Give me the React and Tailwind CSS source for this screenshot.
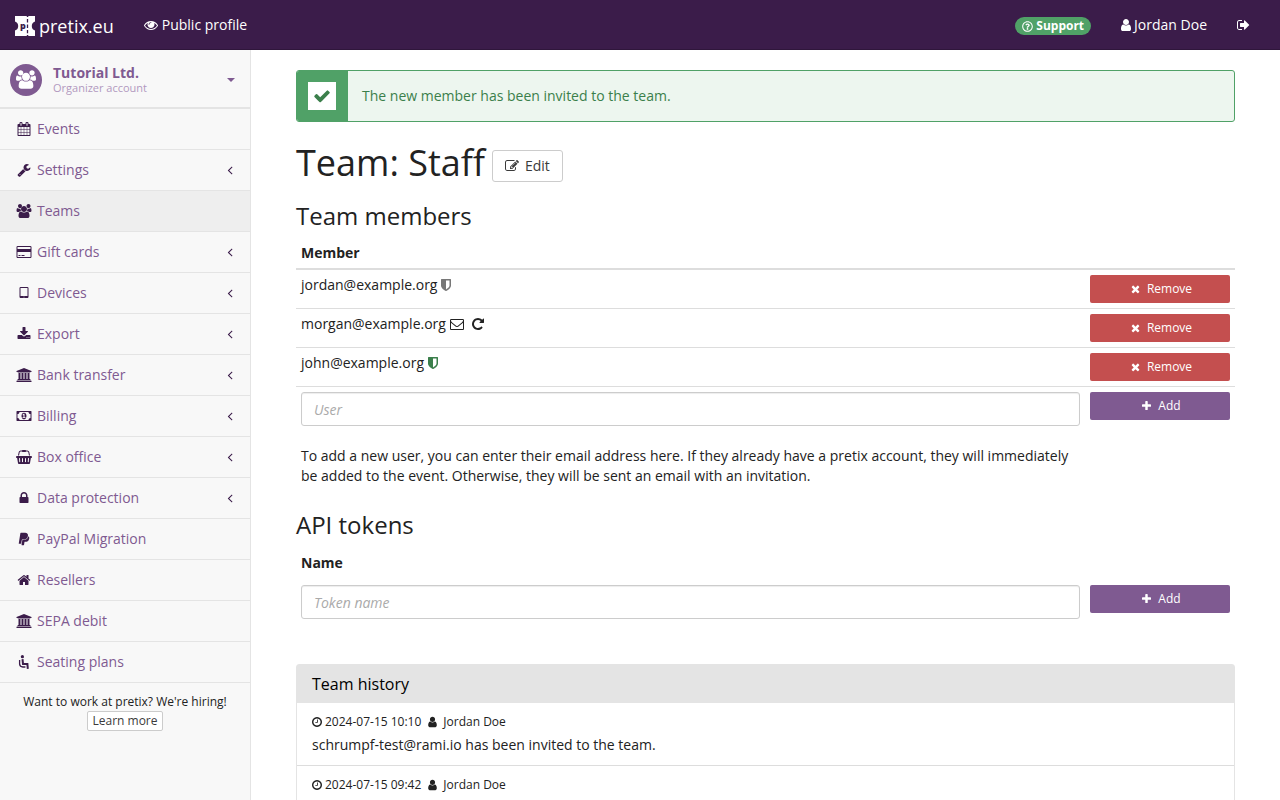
import React from "react";
import { FaPaypal, FaRegQuestionCircle } from "react-icons/fa";

// Each entry: [advance width, canvas width, path] on a 1792-unit-high grid.
const ICONS = {
  eye: [1792, 1792, "M1664 960q-152-236-381-353 61 104 61 225 0 185-131.5 316.5t-316.5 131.5-316.5-131.5-131.5-316.5q0-121 61-225-229 117-381 353 133 205 333.5 326.5t434.5 121.5 434.5-121.5 333.5-326.5zm-720-384q0-20-14-34t-34-14q-125 0-214.5 89.5t-89.5 214.5q0 20 14 34t34 14 34-14 14-34q0-86 61-147t147-61q20 0 34-14t14-34zm848 384q0 34-20 69-140 230-376.5 368.5t-499.5 138.5-499.5-139-376.5-368q-20-35-20-69t20-69q140-229 376.5-368t499.5-139 499.5 139 376.5 368q20 35 20 69z"],
  user: [1280, 1792, "M1536 1399q0 109-62.5 187t-150.5 78h-854q-88 0-150.5-78t-62.5-187q0-85 8.5-160.5t31.5-152 58.5-131 94-89 134.5-34.5q131 128 313 128t313-128q76 0 134.5 34.5t94 89 58.5 131 31.5 152 8.5 160.5zm-256-887q0 159-112.5 271.5t-271.5 112.5-271.5-112.5-112.5-271.5 112.5-271.5 271.5-112.5 271.5 112.5 112.5 271.5z"],
  users: [1920, 1792, "M529 896q-162 5-265 128H130q-82 0-138-40.5T-64 865q0-353 124-353 6 0 43.5 21t97.5 42.5T320 597q67 0 133-23-5 37-5 66 0 139 81 256zm1071 637q0 120-73 189.5t-194 69.5H459q-121 0-194-69.5T192 1533q0-53 3.5-103.5t14-109T236 1212t43-97.5 62-81 85.5-53.5T538 960q10 0 43 21.5t73 48 107 48 135 21.5 135-21.5 107-48 73-48 43-21.5q61 0 111.5 20t85.5 53.5 62 81 43 97.5 26.5 108.5 14 109 3.5 103.5zM640 256q0 106-75 181t-181 75-181-75-75-181 75-181T384 0t181 75 75 181zm640 384q0 159-112.5 271.5T896 1024 624.5 911.5 512 640t112.5-271.5T896 256t271.5 112.5T1280 640zm576 225q0 78-56 118.5t-138 40.5h-134q-103-123-265-128 81-117 81-256 0-29-5-66 66 23 133 23 59 0 119-21.5t97.5-42.5 43.5-21q124 0 124 353zm-128-609q0 106-75 181t-181 75-181-75-75-181 75-181 181-75 181 75 75 181z"],
  calendar: [1664, 1792, "M192 1664h288v-288h-288v288zm352 0h320v-288h-320v288zm-352-352h288v-320h-288v320zm352 0h320v-320h-320v320zm-352-384h288v-288h-288v288zm736 736h320v-288h-320v288zm-384-736h320v-288h-320v288zm768 736h288v-288h-288v288zm-384-352h320v-320h-320v320zm-352-864v-288q0-13-9.5-22.5t-22.5-9.5h-64q-13 0-22.5 9.5t-9.5 22.5v288q0 13 9.5 22.5t22.5 9.5h64q13 0 22.5-9.5t9.5-22.5zm736 864h288v-320h-288v320zm-384-384h320v-288h-320v288zm384 0h288v-288h-288v288zm32-480v-288q0-13-9.5-22.5t-22.5-9.5h-64q-13 0-22.5 9.5t-9.5 22.5v288q0 13 9.5 22.5t22.5 9.5h64q13 0 22.5-9.5t9.5-22.5zm384-64v1280q0 52-38 90t-90 38h-1408q-52 0-90-38t-38-90v-1280q0-52 38-90t90-38h128v-96q0-66 47-113t113-47h64q66 0 113 47t47 113v96h384v-96q0-66 47-113t113-47h64q66 0 113 47t47 113v96h128q52 0 90 38t38 90z"],
  wrench: [1664, 1792, "M448 1472q0-26-19-45t-45-19-45 19-19 45 19 45 45 19 45-19 19-45zm644-420l-682 682q-37 37-90 37-52 0-91-37l-106-108q-38-36-38-90 0-53 38-91l681-681q39 98 114.5 173.5t173.5 114.5zm634-435q0 39-23 106-47 134-164.5 217.5t-258.5 83.5q-185 0-316.5-131.5t-131.5-316.5 131.5-316.5 316.5-131.5q58 0 121.5 16.5t107.5 46.5q16 11 16 28t-16 28l-293 169v224l193 107q5-3 79-48.5t135.5-81 70.5-35.5q15 0 23.5 10t8.5 25z"],
  card: [1920, 1920, "M1760 128q66 0 113 47t47 113v1216q0 66-47 113t-113 47h-1600q-66 0-113-47t-47-113v-1216q0-66 47-113t113-47h1600zm-1600 128q-13 0-22.5 9.5t-9.5 22.5v224h1664v-224q0-13-9.5-22.5t-22.5-9.5h-1600zm1600 1280q13 0 22.5-9.5t9.5-22.5v-608h-1664v608q0 13 9.5 22.5t22.5 9.5h1600zm-1504-128v-128h256v128h-256zm384 0v-128h384v128h-384z"],
  tablet: [1152, 1792, "M960 1408q0-26-19-45t-45-19-45 19-19 45 19 45 45 19 45-19 19-45zm384-160v-960q0-13-9.5-22.5t-22.5-9.5h-832q-13 0-22.5 9.5t-9.5 22.5v960q0 13 9.5 22.5t22.5 9.5h832q13 0 22.5-9.5t9.5-22.5zm128-960v1088q0 66-47 113t-113 47h-832q-66 0-113-47t-47-113v-1088q0-66 47-113t113-47h832q66 0 113 47t47 113z"],
  download: [1664, 1792, "M1344 1344q0-26-19-45t-45-19-45 19-19 45 19 45 45 19 45-19 19-45zm256 0q0-26-19-45t-45-19-45 19-19 45 19 45 45 19 45-19 19-45zm128-224v320q0 40-28 68t-68 28h-1472q-40 0-68-28t-28-68v-320q0-40 28-68t68-28h465l135 136q58 56 136 56t136-56l136-136h464q40 0 68 28t28 68zm-325-569q17 41-14 70l-448 448q-18 19-45 19t-45-19l-448-448q-31-29-14-70 17-39 59-39h256v-448q0-26 19-45t45-19h256q26 0 45 19t19 45v448h256q42 0 59 39z"],
  bank: [2048, 1920, "M960 0l960 384v128h-128q0 26-20.5 45t-48.5 19h-1526q-28 0-48.5-19t-20.5-45h-128v-128zm-704 640h256v768h128v-768h256v768h128v-768h256v768h128v-768h256v768h59q28 0 48.5 19t20.5 45v64h-1664v-64q0-26 20.5-45t48.5-19h59v-768zm1595 960q28 0 48.5 19t20.5 45v128h-1920v-128q0-26 20.5-45t48.5-19h1782z"],
  money: [1920, 1920, "M768 1152h384v-96h-128v-448h-114l-148 137 77 80q42-37 55-57h2v288h-128v96zm512-256q0 70-21 142t-59.5 134-101.5 101-138 39-138-39-101.5-101-59.5-134-21-142 21-142 59.5-134 101.5-101 138-39 138 39 101.5 101 59.5 134 21 142zm512 256v-512q-106 0-181-75t-75-181h-1152q0 106-75 181t-181 75v512q106 0 181 75t75 181h1152q0-106 75-181t181-75zm128-832v1152q0 26-19 45t-45 19h-1792q-26 0-45-19t-19-45v-1152q0-26 19-45t45-19h1792q26 0 45 19t19 45z"],
  basket: [2048, 2048, "M1920 768q53 0 90.5 37.5t37.5 90.5-37.5 90.5-90.5 37.5h-15l-115 662q-8 46-44 76t-82 30h-1280q-46 0-82-30t-44-76l-115-662h-15q-53 0-90.5-37.5t-37.5-90.5 37.5-90.5 90.5-37.5h1792zm-1435 800q26-2 43.5-22.5t15.5-46.5l-32-416q-2-26-22.5-43.5t-46.5-15.5-43.5 22.5-15.5 46.5l32 416q2 25 20.5 42t43.5 17h5zm411-64v-416q0-26-19-45t-45-19-45 19-19 45v416q0 26 19 45t45 19 45-19 19-45zm384 0v-416q0-26-19-45t-45-19-45 19-19 45v416q0 26 19 45t45 19 45-19 19-45zm352 5l32-416q2-26-15.5-46.5t-43.5-22.5-46.5 15.5-22.5 43.5l-32 416q-2 26 15.5 46.5t43.5 22.5h5q25 0 43.5-17t20.5-42zm-1156-1217l-93 412h-132l101-441q19-88 89-143.5t160-55.5h167q0-26 19-45t45-19h384q26 0 45 19t19 45h167q90 0 160 55.5t89 143.5l101 441h-132l-93-412q-11-44-45.5-72t-79.5-28h-167q0 26-19 45t-45 19h-384q-26 0-45-19t-19-45h-167q-45 0-79.5 28t-45.5 72z"],
  lock: [1152, 1792, "M640 768h512v-192q0-106-75-181t-181-75-181 75-75 181v192zm832 96v576q0 40-28 68t-68 28h-960q-40 0-68-28t-28-68v-576q0-40 28-68t68-28h32v-192q0-184 132-316t316-132 316 132 132 316v192h32q40 0 68 28t28 68z"],
  home: [1664, 1792, "M1472 992v480q0 26-19 45t-45 19h-384v-384h-256v384h-384q-26 0-45-19t-19-45v-480q0-1 .5-3t.5-3l575-474 575 474q1 2 1 6zm223-69l-62 74q-8 9-21 11h-3q-13 0-21-7l-692-577-692 577q-12 8-24 7-13-2-21-11l-62-74q-8-10-7-23.5t11-21.5l719-599q32-26 76-26t76 26l244 204v-195q0-14 9-23t23-9h192q14 0 23 9t9 23v408l219 182q10 8 11 21.5t-7 23.5z"],
  signout: [1664, 1792, "M704 1440q0 4 1 20t.5 26.5-3 23.5-10 19.5-20.5 6.5h-320q-119 0-203.5-84.5t-84.5-203.5v-704q0-119 84.5-203.5t203.5-84.5h320q13 0 22.5 9.5t9.5 22.5q0 4 1 20t.5 26.5-3 23.5-10 19.5-20.5 6.5h-320q-66 0-113 47t-47 113v704q0 66 47 113t113 47h312l11.5 1 11.5 3 8 5.5 7 9 2 13.5zm928-544q0 26-19 45l-544 544q-19 19-45 19t-45-19-19-45v-288h-448q-26 0-45-19t-19-45v-384q0-26 19-45t45-19h448v-288q0-26 19-45t45-19 45 19l544 544q19 19 19 45z"],
  edit: [1792, 1792, "M888 1184l116-116-152-152-116 116v56h96v96h56zm440-720q-16-16-33 1l-350 350q-17 17-1 33t33-1l350-350q17-17 1-33zm80 594v190q0 119-84.5 203.5t-203.5 84.5h-832q-119 0-203.5-84.5t-84.5-203.5v-832q0-119 84.5-203.5t203.5-84.5h832q63 0 117 25 15 7 18 23 3 17-9 29l-49 49q-14 14-32 8-23-6-45-6h-832q-66 0-113 47t-47 113v832q0 66 47 113t113 47h832q66 0 113-47t47-113v-126q0-13 9-22l64-64q15-15 35-7t20 29zm-96-738l288 288-672 672h-288v-288zm444 132l-92 92-288-288 92-92q28-28 68-28t68 28l152 152q28 28 28 68t-28 68z"],
  check: [1792, 1792, "M1671 566q0 40-28 68l-724 724-136 136q-28 28-68 28t-68-28l-136-136-362-362q-28-28-28-68t28-68l136-136q28-28 68-28t68 28l294 295 656-657q28-28 68-28t68 28l136 136q28 28 28 68z"],
  times: [1408, 1792, "M1490 1322q0 40-28 68l-136 136q-28 28-68 28t-68-28l-294-294-294 294q-28 28-68 28t-68-28l-136-136q-28-28-28-68t28-68l294-294-294-294q-28-28-28-68t28-68l136-136q28-28 68-28t68 28l294 294 294-294q28-28 68-28t68 28l136 136q28 28 28 68t-28 68l-294 294 294 294q28 28 28 68z"],
  plus: [1408, 1792, "M1600 736v192q0 40-28 68t-68 28h-416v416q0 40-28 68t-68 28h-192q-40 0-68-28t-28-68v-416h-416q-40 0-68-28t-28-68v-192q0-40 28-68t68-28h416v-416q0-40 28-68t68-28h192q40 0 68 28t28 68v416h416q40 0 68 28t28 68z"],
  shield: [1280, 1792, "M1344 960v-640h-448v1137q119-63 213-137 235-184 235-360zm192-768v768q0 86-33.5 170.5t-83 150-118 127.5-126.5 103-121 77.5-89.5 49.5-42.5 20q-12 6-26 6t-26-6q-16-7-42.5-20t-89.5-49.5-121-77.5-126.5-103-118-127.5-83-150-33.5-170.5v-768q0-26 19-45t45-19h1152q26 0 45 19t19 45z"],
  envelope: [1792, 1792, "M1664 1504v-768q-32 36-69 66-268 206-426 338-51 43-83 67t-86.5 48.5-102.5 24.5h-2q-48 0-102.5-24.5t-86.5-48.5-83-67q-158-132-426-338-37-30-69-66v768q0 13 9.5 22.5t22.5 9.5h1472q13 0 22.5-9.5t9.5-22.5zm0-1051v-24.5l-.5-13-3-12.5-5.5-9-9-7.5-14-2.5h-1472q-13 0-22.5 9.5t-9.5 22.5q0 168 147 284 193 152 401 317 6 5 35 29.5t46 37.5 44.5 31.5 50.5 27.5 43 9h2q20 0 43-9t50.5-27.5 44.5-31.5 46-37.5 35-29.5q208-165 401-317 54-43 100.5-115.5t46.5-131.5zm128-37v1088q0 66-47 113t-113 47h-1472q-66 0-113-47t-47-113v-1088q0-66 47-113t113-47h1472q66 0 113 47t47 113z"],
  repeat: [1536, 1792, "M1664 256v448q0 26-19 45t-45 19h-448q-42 0-59-40-17-39 14-69l138-138q-148-137-349-137-104 0-198.5 40.5t-163.5 109.5-109.5 163.5-40.5 198.5 40.5 198.5 109.5 163.5 163.5 109.5 198.5 40.5q119 0 225-52t179-147q7-10 23-12 15 0 25 9l137 138q9 8 9.5 20.5t-7.5 22.5q-109 132-264 204.5t-327 72.5q-156 0-298-61t-245-164-164-245-61-298 61-298 164-245 245-164 298-61q147 0 284.5 55.5t244.5 156.5l130-129q29-31 70-14 39 17 39 59z"],
  clock: [1536, 1792, "M1024 544v448q0 14-9 23t-23 9h-320q-14 0-23-9t-9-23v-64q0-14 9-23t23-9h224v-352q0-14 9-23t23-9h64q14 0 23 9t9 23zm416 352q0-148-73-273t-198-198-273-73-273 73-198 198-73 273 73 273 198 198 273 73 273-73 198-198 73-273zm224 0q0 209-103 385.5t-279.5 279.5-385.5 103-385.5-103-279.5-279.5-103-385.5 103-385.5 279.5-279.5 385.5-103 385.5 103 279.5 279.5 103 385.5z"],
  angle: [768, 1792, "M1203 544q0 13-10 23l-393 393 393 393q10 10 10 23t-10 23l-50 50q-10 10-23 10t-23-10l-466-466q-10-10-10-23t10-23l466-466q10-10 23-10t23 10l50 50q10 10 10 23z"],
};

function Icon({ name, size = 14, fixed = false, className = "" }) {
  const [advance, canvas, d] = ICONS[name];
  const width = fixed ? 2304 : advance;
  return (
    <svg
      aria-hidden="true"
      width={Math.round((width * size) / 1792)}
      height={size}
      viewBox={`${(canvas - width) / 2} 0 ${width} 1792`}
      fill="currentColor"
      className={`inline-block shrink-0 ${className}`}
    >
      <path d={d} />
    </svg>
  );
}

function SeatIcon() {
  return (
    <svg aria-hidden="true" width="18" height="16" viewBox="0 0 18 16" className="shrink-0">
      <circle cx="7.4" cy="2.7" r="1.6" fill="currentColor" />
      <path d="M7.5 5.2 8 9.9h4.4l.4 4.9" fill="none" stroke="currentColor" strokeWidth="2" />
      <path d="M4.6 6v4.2q.4 2.7 3.2 2.8h2.6" fill="none" stroke="currentColor" strokeWidth="1.3" />
    </svg>
  );
}

function Logo() {
  return (
    <svg aria-hidden="true" width="20" height="20" viewBox="0 0 20 20" className="shrink-0">
      <path d="M0 0h11.8v1h1.5V0H20v5.5Q16.8 6.500 16.8 10T20 14.500V20h-6.700v-1h-1.500v1H0v-5.500Q3.200 13.500 3.200 10T0 5.500z" fill="#fff" />
      <path d="M12.500 3v3.500M12.500 8.500v3.500M12.500 14v3.200" stroke="#3b1c4a" strokeWidth="1.300" />
      <text x="5" y="12.500" fontSize="9" fontWeight="800" fontFamily="Open Sans, sans-serif" fill="#3b1c4a">p</text>
    </svg>
  );
}

const NAV = [
  ["Events", "calendar", false],
  ["Settings", "wrench", true],
  ["Teams", "users", false],
  ["Gift cards", "card", true],
  ["Devices", "tablet", true],
  ["Export", "download", true],
  ["Bank transfer", "bank", true],
  ["Billing", "money", true],
  ["Box office", "basket", true],
  ["Data protection", "lock", true],
  ["PayPal Migration", "paypal", false],
  ["Resellers", "home", false],
  ["SEPA debit", "bank", false],
  ["Seating plans", "seat", false],
];

function NavIcon({ name }) {
  if (name === "seat") return <SeatIcon />;
  if (name === "paypal") return <FaPaypal aria-hidden="true" className="h-[14px] w-[18px] shrink-0" />;
  return <Icon name={name} fixed />;
}

function Sidebar() {
  return (
    <aside className="w-[251px] shrink-0 border-r border-[#e4e4e4] bg-[#f8f8f8]">
      <button type="button" className="flex h-[59px] w-full items-center border-b-2 border-[#e4e4e4] pt-[2px] pr-[15px] pl-[10px] text-left">
        <span className="flex size-8 shrink-0 items-center justify-center rounded-full bg-[#7f5a91] text-white">
          <Icon name="users" size={19} />
        </span>
        <span className="ml-[11px] grow">
          <span className="block text-[14px] leading-[15px] font-bold text-[#7f5a91]">Tutorial Ltd.</span>
          <span className="block text-[11px] leading-[15px] text-[#b298bf]">Organizer account</span>
        </span>
        <svg aria-hidden="true" width="8" height="4" viewBox="0 0 8 4" className="text-[#7f5a91]">
          <path d="M0 0h8L4 4z" fill="currentColor" />
        </svg>
      </button>
      <nav>
        <ul>
          {NAV.map(([label, icon, more]) => (
            <li key={label} className="border-b border-[#e4e4e4]">
              <a
                href="#"
                className={`flex h-10 items-center gap-1 pr-[17px] pl-[15px] text-[#3b1c4a] ${label === "Teams" ? "bg-[#eeeeee]" : ""}`}
              >
                <NavIcon name={icon} />
                <span className="grow text-[#7f5a91]">{label}</span>
                {more && <Icon name="angle" />}
              </a>
            </li>
          ))}
        </ul>
      </nav>
      <div className="pt-[10px] text-center text-[12px] leading-[18px] text-[#222222]">
        <p>Want to work at pretix? We're hiring!</p>
        <a href="#" className="inline-block rounded-[2px] border border-[#cccccc] bg-white px-1 leading-[18px] text-[#3b3b3b]">
          Learn more
        </a>
      </div>
    </aside>
  );
}

function ActionButton({ icon, color, children }) {
  return (
    <button type="button" className={`flex h-7 w-full items-center justify-center gap-[7px] rounded-[2px] pl-[3px] text-[12px] text-white ${color}`}>
      <Icon name={icon} size={12} />
      {children}
    </button>
  );
}

const MEMBERS = [
  ["jordan@example.org", <Icon key="s" name="shield" className="text-[#777777]" />],
  [
    "morgan@example.org",
    <React.Fragment key="m">
      <Icon name="envelope" />
      <button type="button" aria-label="Resend invite" className="ml-1 flex"><Icon name="repeat" /></button>
    </React.Fragment>,
  ],
  ["john@example.org", <Icon key="s" name="shield" className="text-[#3b7f4b]" />],
];

const HISTORY = [
  ["2024-07-15 10:10", "Jordan Doe", "schrumpf-test@rami.io has been invited to the team."],
  ["2024-07-15 09:42", "Jordan Doe", ""],
];

const INPUT =
  "block h-[34px] w-full rounded-[3px] border border-[#cccccc] bg-white px-3 text-[14px] text-[#555555] shadow-[inset_0_1px_1px_rgba(0,0,0,0.075)] placeholder:text-[#aaaaaa] placeholder:italic";

export default function App() {
  return (
    <div className="flex h-screen flex-col overflow-hidden bg-white font-['Open_Sans',sans-serif] text-[14px] leading-[20px] text-[#222222]">
      <header className="flex h-[50px] shrink-0 items-center border-b border-[#2f163b] bg-[#3b1c4a] pt-[2px] pr-[30px] pl-[15px] text-white">
        <a href="#" className="flex items-center gap-1 text-[18px]">
          <Logo />
          pretix.eu
        </a>
        <a href="#" className="ml-[30px] flex items-center gap-1 pb-[2px]">
          <Icon name="eye" />
          Public profile
        </a>
        <div className="ml-auto flex items-center pb-[2px]">
          <a href="#" className="mt-[3px] flex h-[18px] items-center gap-[3px] rounded-full bg-[#50a167] px-[7px] text-[12px] font-bold">
            <FaRegQuestionCircle aria-hidden="true" className="size-[11px]" />
            Support
          </a>
          <a href="#" className="ml-[30px] flex items-center gap-[3px]">
            <Icon name="user" />
            Jordan Doe
          </a>
          <a href="#" aria-label="Log out" className="ml-[30px] flex">
            <Icon name="signout" />
          </a>
        </div>
      </header>
      <div className="flex min-h-0 grow">
        <Sidebar />
        <main className="min-w-0 grow px-[45px] pt-5">
          <div role="status" className="flex h-[52px] overflow-hidden rounded-[3px] border border-[#50a167] bg-[#edf6ef] text-[#3b7f4b]">
            <span className="flex w-[51px] shrink-0 items-center bg-[#50a167] pl-[11px]">
              <span className="flex size-7 items-center justify-center bg-white">
                <Icon name="check" size={18} />
              </span>
            </span>
            <span className="self-center pl-[14px]">The new member has been invited to the team.</span>
          </div>

          <div className="mt-5 flex items-center gap-[7px]">
            <h1 className="text-[36px] leading-[42px]">Team: Staff</h1>
            <a href="#" className="mt-[6px] flex h-8 items-center gap-[6px] rounded-[3px] border border-[#cccccc] px-3 text-[#3b3b3b] hover:bg-[#eeeeee]">
              <Icon name="edit" />
              Edit
            </a>
          </div>

          <h2 className="mt-[18px] text-[24px] leading-[28px]">Team members</h2>
          <table className="mt-[11px] w-full table-fixed border-collapse">
            <thead>
              <tr className="border-b-2 border-[#dddddd]">
                <th scope="col" className="h-7 px-[5px] pb-1 text-left font-bold">Member</th>
                <th scope="col" aria-label="Actions" className="w-[150px]" />
              </tr>
            </thead>
            <tbody>
              {MEMBERS.map(([email, icons]) => (
                <tr key={email} className="border-b border-[#dddddd]">
                  <td className="p-[5px] align-top">
                    <span className="flex items-center gap-1">
                      {email}
                      {icons}
                    </span>
                  </td>
                  <td className="p-[5px]">
                    <ActionButton icon="times" color="bg-[#c44f4f]">Remove</ActionButton>
                  </td>
                </tr>
              ))}
              <tr>
                <td className="p-[5px] align-top">
                  <input type="email" aria-label="User" placeholder="User" className={INPUT} />
                  <p className="mt-5">
                    To add a new user, you can enter their email address here. If they already have a pretix account, they will immediately be added to the event. Otherwise, they will be sent an email with an invitation.
                  </p>
                </td>
                <td className="p-[5px] align-top">
                  <ActionButton icon="plus" color="bg-[#7f5a91]">Add</ActionButton>
                </td>
              </tr>
            </tbody>
          </table>

          <h2 className="mt-5 text-[24px] leading-[28px]">API tokens</h2>
          <table className="mt-[9px] w-full table-fixed border-collapse">
            <thead>
              <tr>
                <th scope="col" className="px-[5px] pt-[5px] pb-[7px] text-left font-bold">Name</th>
                <th scope="col" aria-label="Actions" className="w-[150px]" />
              </tr>
            </thead>
            <tbody>
              <tr>
                <td className="p-[5px] align-top">
                  <input type="text" aria-label="Token name" placeholder="Token name" className={INPUT} />
                </td>
                <td className="p-[5px] align-top">
                  <ActionButton icon="plus" color="bg-[#7f5a91]">Add</ActionButton>
                </td>
              </tr>
            </tbody>
          </table>

          <section className="mt-10 rounded-[3px] border border-[#e4e4e4]">
            <h3 className="bg-[#e4e4e4] px-[15px] py-[9px] text-[16px] text-black">Team history</h3>
            <ul>
              {HISTORY.map(([time, who, what]) => (
                <li key={time} className="border-b border-[#dddddd] px-[15px] pt-[9px] pb-[10px]">
                  <p className="flex items-center text-[12px]">
                    <Icon name="clock" size={12} />
                    <span className="ml-[3px]">{time}</span>
                    <Icon name="user" size={12} className="ml-[7px]" />
                    <span className="ml-[6px]">{who}</span>
                  </p>
                  <p className="mt-[3px] min-h-5">{what}</p>
                </li>
              ))}
            </ul>
          </section>
        </main>
      </div>
    </div>
  );
}
